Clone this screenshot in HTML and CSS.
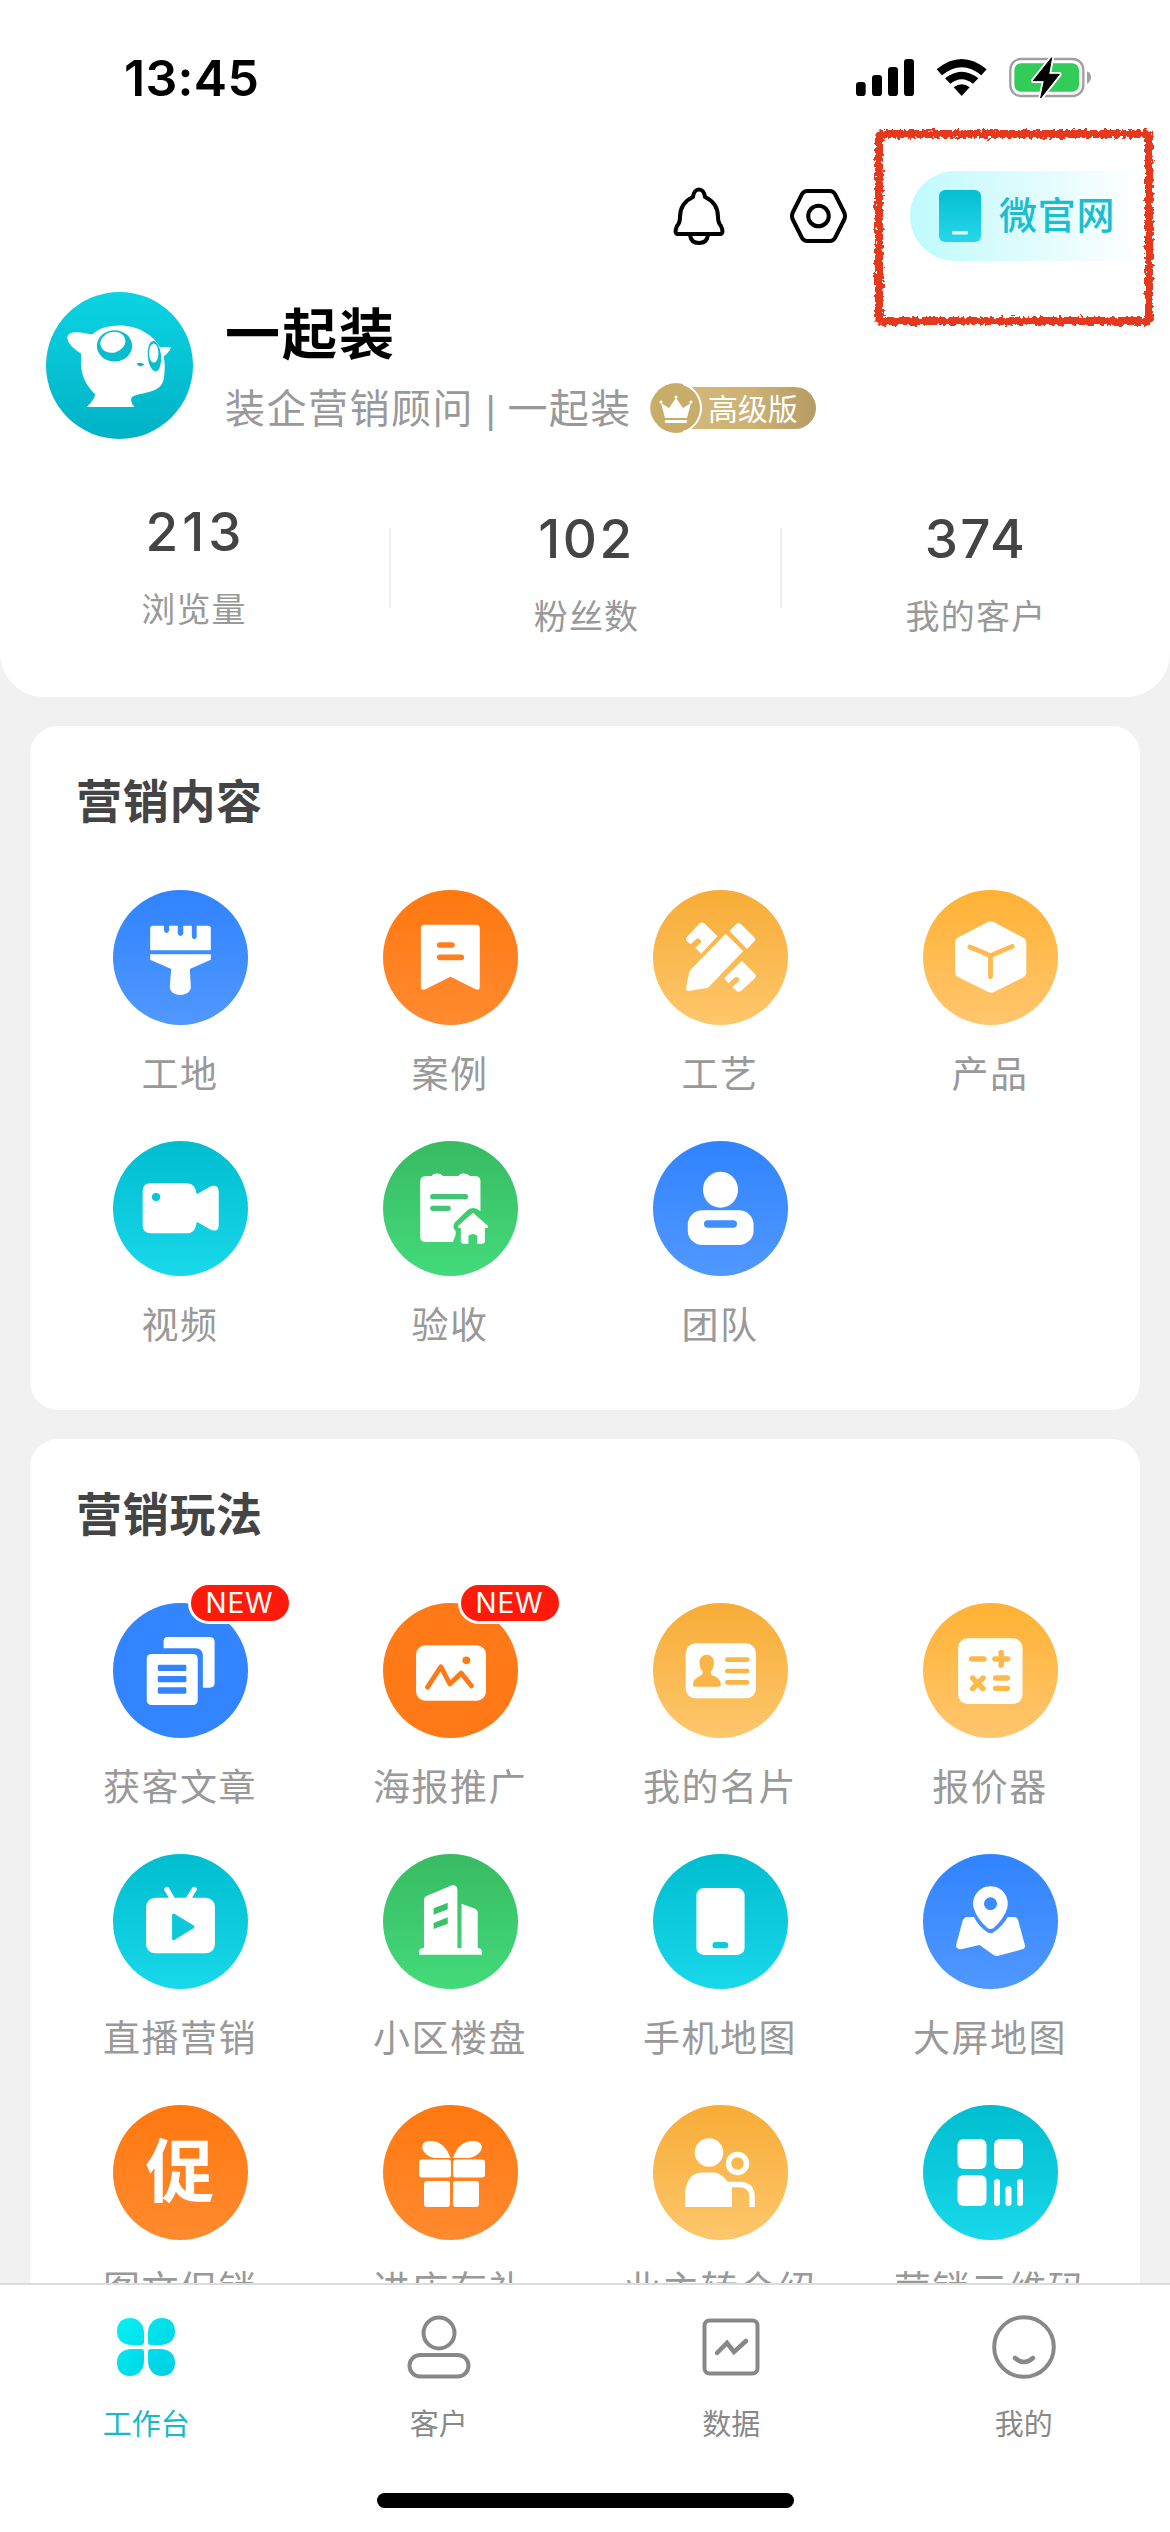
FILE: index.html
```html
<!DOCTYPE html>
<html lang="zh-CN">
<head>
<meta charset="utf-8">
<title>工作台</title>
<link rel="stylesheet" href="styles.css">
</head>
<body>
<div class="app">
  <header class="header">
    <div class="status">
      <span class="time">13:45</span>
      <svg class="status-icons" viewBox="0 0 810 240" width="270" height="80">
        <rect x="48" y="126" width="29" height="42" rx="10"/><rect x="96" y="105" width="30" height="63" rx="10"/><rect x="144" y="81" width="30" height="87" rx="10"/><rect x="192" y="57" width="30" height="111" rx="10"/>
        <path d="M290 88Q365 26 440 88L424 106Q365 57 306 106Z"/>
        <path d="M315 115Q365 75 415 115L399 131Q365 104 331 131Z"/>
        <path d="M341 142Q365 124 389 142L365 168Z"/>
        <rect x="511" y="57" width="219" height="111" rx="32" fill="#fff" stroke="#a0a0a2" stroke-width="7"/>
        <path d="M741 94Q753 99 753 112T741 131Z" fill="#a0a0a2"/>
        <rect x="523" y="70" width="194" height="85" rx="20" fill="#33cc59"/>
        <path d="M635 53L580 122H613L602 174L658 103H626Z" stroke="#fff" stroke-width="14" stroke-linejoin="round"/>
        <path d="M635 53L580 122H613L602 174L658 103H626Z" stroke="#000" stroke-width="3" stroke-linejoin="round"/>
      </svg>
    </div>
    <div class="toolbar">
      <svg class="bell" viewBox="0 0 52 58" width="52" height="58" fill="none" stroke="#000" stroke-width="4" stroke-linejoin="round">
        <path d="M20 10C21 0 31 0 32 10Q45 16 45 30Q45 36 48 39Q52 48 45 47H7Q0 48 4 39Q7 36 7 30Q7 16 20 10Z"/>
        <path d="M17 48Q18 56 26 56T35 48"/>
      </svg>
      <svg class="hexagon" viewBox="0 0 57 54" width="57" height="54" fill="none" stroke="#000" stroke-width="4">
        <path d="M17 2H40Q43 2 45 5L54 23Q56 27 54 31L45 49Q43 52 40 52H17Q14 52 12 49L3 31Q1 27 3 23L12 5Q14 2 17 2Z"/><circle cx="28.5" cy="27" r="10.3"/>
      </svg>
      <div class="site">
        <svg viewBox="0 0 42 52" width="42" height="52"><defs><linearGradient id="gp" x2="0" y2="1"><stop stop-color="#06bfd2"/><stop offset="1" stop-color="#26d7e9"/></linearGradient></defs><rect width="42" height="52" rx="6" fill="url(#gp)"/><rect x="13" y="41" width="16" height="3.5" rx="1" fill="#e9ffff"/></svg>
        <span>微官网</span>
        <svg class="mark" viewBox="0 0 290 206" width="290" height="206"><defs><filter id="crayon" x="-5%" y="-5%" width="110%" height="110%"><feTurbulence type="fractalNoise" baseFrequency=".28" numOctaves="2" seed="4"/><feDisplacementMap in="SourceGraphic" scale="7" xChannelSelector="R" yChannelSelector="G"/></filter></defs><rect x="10" y="10" width="270" height="187" rx="3" fill="none" stroke="#e6391b" stroke-width="8" filter="url(#crayon)"/></svg>
      </div>
    </div>
    <div class="profile">
      <svg class="avatar" viewBox="20 20 442 442" width="147" height="147">
        <defs><linearGradient id="ga" x2="0" y2="1"><stop stop-color="#0bd3e2"/><stop offset="1" stop-color="#00b2c6"/></linearGradient></defs>
        <circle cx="241" cy="241" r="221" fill="url(#ga)"/>
        <path fill="#fff" d="M84 159C84 136 122 138 159 148C190 113 276 112 317 141Q350 160 363 187Q380 183 396 187Q390 202 374 214Q380 244 374 281C366 325 315 319 279 335Q270 348 286 366H143Q165 343 168 328C132 292 121 260 126 206Q86 180 84 159Z"/>
        <ellipse cx="226" cy="182" rx="53" ry="47" fill="#08bdcd"/><ellipse cx="221" cy="171" rx="38" ry="31" fill="#fff" transform="rotate(-16 221 171)"/>
        <ellipse cx="346" cy="213" rx="20" ry="46" fill="#08bdcd" transform="rotate(-5 346 213)"/><ellipse cx="344" cy="204" rx="14" ry="29" fill="#fff"/>
        <path d="M292 235Q305 230 316 238Q303 250 292 235Z" fill="#08b4c6"/>
      </svg>
      <div class="who">
        <h1>一起装</h1>
        <div class="role"><span>装企营销顾问 <i>|</i> 一起装</span>
          <div class="level">
            <svg viewBox="0 0 52 52" width="52" height="52"><circle cx="26" cy="26" r="25" fill="#c8ac69" /><path d="M33 2A25 25 0 0 1 33 50" fill="none" stroke="#fff" stroke-width="2"/><path fill="#fff" d="M11 21L19 26L26 16L33 26L41 21L37 36H15ZM15 38H37V41H15Z"/><circle cx="11" cy="20" r="1.6" fill="#fff"/><circle cx="26" cy="15" r="1.6" fill="#fff"/><circle cx="41" cy="20" r="1.6" fill="#fff"/></svg>
            <span>高级版</span>
          </div>
        </div>
      </div>
    </div>
    <div class="stats">
      <div class="stat first"><b>213</b><span>浏览量</span></div>
      <div class="stat"><b>102</b><span>粉丝数</span></div>
      <div class="stat"><b>374</b><span>我的客户</span></div>
    </div>
  </header>

  <main class="content">
    <section class="card">
      <h2>营销内容</h2>
      <div class="grid">
        <div class="item"><div class="disc blue"><svg viewBox="154 90 392 405" preserveAspectRatio="none">
          <path d="M270 197H302V212Q309 226 317 212V197H342V222Q350 234 358 222V197H383V232Q390 244 397 232V197H430Q438 197 438 205V271H262V205Q262 197 270 197ZM262 283H438V299L377 327L380 380C380 413 319 413 319 380L323 327L262 299Z"/></svg></div><span>工地</span></div>
        <div class="item"><div class="disc orange"><svg viewBox="938 90 392 405" preserveAspectRatio="none">
          <path d="M1060 194H1208Q1219 194 1219 205V380Q1219 392 1207 388L1134 350L1061 388Q1048 392 1048 380V205Q1048 194 1060 194Z"/><path class="cut" d="M1103 255H1138M1103 292H1165" stroke="#ff7f1f" stroke-width="17"/></svg></div><span>案例</span></div>
        <div class="item"><div class="disc amber"><svg viewBox="154 90 392 405" preserveAspectRatio="none">
          <path d="M365 221L416 273L314 383L257 393Q249 394 250 385L260 333ZM376 213L397 191Q403 187 409 192L449 233Q453 238 449 243L427 267ZM290 190Q297 185 303 190L341 229L294 281L277 264L294 246Q292 233 281 236L263 253L251 242Q248 237 252 231ZM412 302L451 343Q455 349 450 355L409 393Q403 398 397 393L385 382L405 361Q405 348 392 352L373 370L361 355Z"/></svg></div><span>工艺</span></div>
        <div class="item"><div class="disc gold"><svg viewBox="938 90 392 405" preserveAspectRatio="none">
          <path d="M1125 187Q1135 182 1145 187L1227 232Q1238 238 1238 248V337Q1238 347 1228 353L1146 395Q1136 400 1126 395L1041 352Q1031 347 1031 336V247Q1031 237 1041 232Z"/><path class="cut" d="M1074 261L1134 287L1197 259M1134 287V350" stroke="#ffba4d" stroke-width="14"/></svg></div><span>产品</span></div>
        <div class="item"><div class="disc cyan"><svg viewBox="154 843 392 405" preserveAspectRatio="none">
          <path d="M262 970H368Q394 970 397 1003L438 979Q460 972 461 995V1096Q461 1118 438 1109L397 1085Q394 1120 367 1120H264Q240 1120 240 1096V995Q240 970 262 970Z"/><circle cx="279" cy="1011" r="12" fill="#07c6d8"/></svg></div><span>视频</span></div>
        <div class="item"><div class="disc green"><svg viewBox="938 843 392 405" preserveAspectRatio="none">
          <path d="M1063 948H1079Q1085 938 1105 942L1112 948H1157Q1163 938 1181 942L1191 948H1206Q1221 949 1221 964V1054Q1199 1034 1180 1054L1147 1087Q1137 1100 1149 1114V1125L1141 1146H1062Q1046 1146 1046 1130V965Q1046 949 1063 948Z"/><path class="cut" d="M1083 1010H1177M1083 1045H1127" stroke="#42c572" stroke-width="16"/><path d="M1199 1058L1243 1098V1104H1234V1144Q1234 1151 1227 1151H1212V1127Q1199 1117 1186 1127V1151H1171Q1164 1151 1164 1144V1104H1156V1098Z"/></svg></div><span>验收</span></div>
        <div class="item"><div class="disc blue"><svg viewBox="154 843 392 405" preserveAspectRatio="none">
          <ellipse cx="350" cy="989" rx="51" ry="54"/><rect x="255" y="1051" width="191" height="104" rx="43"/><path class="cut" d="M313 1092H387" stroke="#408fff" stroke-width="22"/></svg></div><span>团队</span></div>
      </div>
    </section>

    <section class="card">
      <h2>营销玩法</h2>
      <div class="grid">
        <div class="item"><div class="disc flat-blue"><svg viewBox="154 128 392 405" preserveAspectRatio="none">
          <path d="M313 230H434Q449 230 449 245V368Q449 382 434 382H415V285Q414 265 394 264H301V243Q301 230 313 230Z"/><rect x="252" y="281" width="148" height="153" rx="14"/><g fill="#3385ff"><rect x="284" y="313" width="83" height="19" rx="4"/><rect x="284" y="347" width="83" height="19" rx="4"/><rect x="284" y="381" width="83" height="19" rx="4"/></g></svg><em>NEW</em></div><span>获客文章</span></div>
        <div class="item"><div class="disc flat-orange"><svg viewBox="938 128 392 405" preserveAspectRatio="none">
          <rect x="1034" y="255" width="203" height="166" rx="27"/><path class="cut" d="M1067 381L1106 319L1132 371L1165 338L1195 377" stroke="#ff7a17" stroke-width="14"/><circle cx="1180" cy="300" r="11.5" fill="#ff7a17"/></svg><em>NEW</em></div><span>海报推广</span></div>
        <div class="item"><div class="disc amber"><svg viewBox="154 128 392 405" preserveAspectRatio="none">
          <rect x="249" y="249" width="204" height="165" rx="29"/><path fill="#fab548" d="M289 306C289 276 331 276 331 306Q331 324 322 333Q321 346 333 348Q350 355 351 373Q351 379 345 379H275Q269 379 270 373Q271 355 289 348Q300 343 298 333Q289 324 289 306Z"/><path class="cut" d="M370 298H427M370 332H427M370 366H427" stroke="#fab548" stroke-width="14"/></svg></div><span>我的名片</span></div>
        <div class="item"><div class="disc gold"><svg viewBox="938 128 392 405" preserveAspectRatio="none">
          <rect x="1040" y="234" width="187" height="197" rx="28"/><path class="cut" d="M1079 296H1115M1147 296H1184M1165 276V315M1082 353L1112 385M1112 353L1082 385M1149 353H1183M1149 384H1183" stroke="#ffb94b" stroke-width="16"/></svg></div><span>报价器</span></div>
        <div class="item"><div class="disc cyan"><svg viewBox="154 882 392 405" preserveAspectRatio="none">
          <path d="M310 988L327 1018M390 988L372 1018" stroke="#fff" stroke-width="15" stroke-linecap="round"/><rect x="250" y="1013" width="200" height="167" rx="27"/><path d="M330 1065L386 1100L330 1136Z" fill="#0bc8da" stroke="#0bc8da" stroke-width="9" stroke-linejoin="round"/></svg></div><span>直播营销</span></div>
        <div class="item"><div class="disc green"><svg viewBox="938 882 392 405" preserveAspectRatio="none">
          <path d="M1066 1007L1138 976Q1154 974 1154 990V1164H1166V1031L1205 1046Q1213 1050 1213 1057V1164Q1225 1164 1225 1175V1184H1043V1173Q1045 1164 1057 1164V1020Q1057 1011 1066 1007Z"/><path fill="#39c368" d="M1085 1045L1126 1028V1048L1085 1064ZM1085 1089L1126 1072V1091L1085 1107Z"/></svg></div><span>小区楼盘</span></div>
        <div class="item"><div class="disc cyan"><svg viewBox="154 882 392 405" preserveAspectRatio="none">
          <rect x="280" y="984" width="140" height="201" rx="22"/><rect x="327" y="1146" width="45" height="19" rx="8" fill="#0ccbdc"/></svg></div><span>手机地图</span></div>
        <div class="item"><div class="disc blue"><svg viewBox="938 882 392 405" preserveAspectRatio="none">
          <path fill-rule="evenodd" d="M1134 979C1170 979 1190 1013 1183 1043Q1174 1075 1143 1104Q1134 1110 1125 1104Q1094 1075 1085 1043C1078 1013 1099 979 1134 979ZM1134 1012A19 19 0 1 0 1134 1050A19 19 0 1 0 1134 1012Z"/><path d="M1066 1071H1086Q1099 1099 1124 1116Q1134 1124 1144 1116Q1169 1099 1184 1071H1201Q1211 1071 1214 1080L1234 1156Q1235 1166 1226 1168L1154 1188Q1148 1189 1142 1184L1102 1155L1048 1168Q1031 1168 1035 1152L1053 1082Q1057 1072 1066 1071Z"/></svg></div><span>大屏地图</span></div>
        <div class="item"><div class="disc orange"><strong>促</strong></div><span>图文促销</span></div>
        <div class="item"><div class="disc orange"><svg viewBox="0 0 135 135">
          <path d="M67.500 53H52C38 51 35 36 46 36Q61 35 67.500 53ZM70 53Q76 35 92 36C104 38 99 51 86 53Z"/><rect x="36" y="54.500" width="32" height="18" rx="3"/><rect x="70" y="54.500" width="32" height="18" rx="3"/><rect x="41" y="76" width="26" height="26" rx="3"/><rect x="70" y="76" width="26" height="26" rx="3"/></svg></div><span>进店有礼</span></div>
        <div class="item"><div class="disc amber"><svg viewBox="0 0 135 135">
          <circle cx="56" cy="47.500" r="14.300"/><path d="M32 102V88Q34 68 49 67.500H61Q68 68 74 76L79 80V102Z"/><circle cx="84.500" cy="58.500" r="9" fill="none" stroke="#fff" stroke-width="5.500"/><path d="M75 79.500H87Q99 80 99 92V102" fill="none" stroke="#fff" stroke-width="5.500"/></svg></div><span>业主转介绍</span></div>
        <div class="item"><div class="disc cyan"><svg viewBox="0 0 135 135">
          <rect x="34.500" y="34" width="29" height="30" rx="6"/><rect x="71" y="34" width="29" height="30" rx="6"/><rect x="34.500" y="70" width="29" height="31" rx="6"/><rect x="71" y="74" width="6" height="27" rx="3"/><rect x="82.500" y="81" width="6" height="20" rx="3"/><rect x="94" y="74" width="6" height="27" rx="3"/></svg></div><span>营销二维码</span></div>
      </div>
    </section>
  </main>

  <footer class="footer">
    <nav class="tabs">
      <div class="tab active"><svg viewBox="0 0 64 64"><defs><linearGradient id="gc" gradientUnits="userSpaceOnUse" x1="2" y1="2" x2="62" y2="62"><stop stop-color="#00f2f4"/><stop offset="1" stop-color="#00cde3"/></linearGradient></defs><path fill="url(#gc)" d="M16 3C24 3 30 9 30 18V27Q30 30 27 30H18C9 30 3 25 3 16.500S8 3 16 3ZM48 3C56 3 61 8 61 16.500S55 30 46 30H37Q34 30 34 27V18C34 9 40 3 48 3ZM18 34H27Q30 34 30 37V46C30 55 24 61 16 61S3 56 3 47.500S9 34 18 34ZM37 34H46C55 34 61 39 61 47.500S56 61 48 61S34 55 34 46V37Q34 34 37 34Z"/></svg><span>工作台</span></div>
      <div class="tab"><svg viewBox="0 0 64 64"><circle cx="32" cy="18" r="15.500"/><rect x="2.500" y="40" width="59" height="21.500" rx="10.700"/></svg><span>客户</span></div>
      <div class="tab"><svg viewBox="0 0 64 64"><rect x="5.500" y="5.500" width="53" height="53" rx="5"/><path d="M18 38L28 28L35 37L47 26" stroke-width="4.500"/></svg><span>数据</span></div>
      <div class="tab"><svg viewBox="0 0 64 64"><circle cx="32" cy="32" r="29.800"/><path d="M23 43Q32 51 41 43" stroke-width="4.500"/></svg><span>我的</span></div>
    </nav>
    <div class="home"></div>
  </footer>
</div>
</body>
</html>
```
FILE: styles.css
```css
* { box-sizing: border-box; }
body {
  margin: 0;
  font-family: Inter, "Noto Sans CJK SC", sans-serif;
  color: #444;
}
svg { display: block; flex: none; }
.app {
  width: 1170px;
  height: 2532px;
  display: flex;
  flex-direction: column;
  background: #f1f1f1;
  overflow: hidden;
}

/* header */
.header {
  height: 697px;
  flex: none;
  background: #fff;
  border-radius: 0 0 44px 44px;
}
.status {
  height: 130px;
  padding: 40px 60px 0 124px;
  display: flex;
  justify-content: space-between;
}
.time {
  font-size: 50px;
  font-weight: 600;
  line-height: 76px;
  letter-spacing: .3px;
  color: #000;
}
.toolbar {
  height: 172px;
  display: flex;
  align-items: center;
  padding-left: 673px;
}
.hexagon { margin-left: 65px; }
.site {
  position: relative;
  display: flex;
  align-items: center;
  width: 232px;
  height: 90px;
  margin-left: 63px;
  padding-left: 29px;
  gap: 18px;
  border-radius: 45px 0 0 45px;
  background: linear-gradient(90deg, #befbfd, #d9fbfd 40%, #fff);
  font-size: 38px;
  font-weight: 500;
  letter-spacing: .7px;
  color: #19bfd0;
}
.site span { margin-bottom: 7px; }
.mark {
  position: absolute;
  left: -41px;
  top: -47px;
}
.profile {
  height: 150px;
  padding: 0 0 0 46px;
  margin-top: -10px;
  display: flex;
}
.who { margin-left: 32px; padding-top: 6px; }
h1 {
  margin: 0;
  font-size: 55px;
  line-height: 72px;
  letter-spacing: 2px;
  font-weight: 700;
  color: #000;
}
.role {
  display: flex;
  align-items: center;
  margin-top: 8px;
  height: 56px;
  font-size: 40px;
  letter-spacing: 1.5px;
  word-spacing: -1px;
  white-space: nowrap;
  color: #999;
}
.role i {
  font-family: "Liberation Sans", sans-serif;
  font-style: normal;
  font-size: 38px;
  letter-spacing: 0;
}
.level {
  display: flex;
  align-items: center;
  width: 166px;
  height: 42px;
  margin: 4px 0 0 18px;
  border-radius: 21px;
  background: linear-gradient(90deg, #d4bb7c, #cdb274 60%, #b79b64);
  color: #fff;
  font-size: 30px;
  letter-spacing: 0;
}
.level svg { margin-right: 6px; }
.level span { margin-bottom: 3px; }
.stats {
  height: 180px;
  margin-top: 50px;
  display: flex;
}
.stat {
  width: 391px;
  padding-top: 16px;
  display: flex;
  flex-direction: column;
  align-items: center;
  background: linear-gradient(#eee, #eee) right 36px / 2px 80px no-repeat;
}
.stat:last-child { width: 388px; background: none; }
.stat.first { padding-top: 9px; }
.stat b {
  font-size: 53px;
  line-height: 62px;
  font-weight: 500;
  letter-spacing: 2.5px;
}
.stat.first b { letter-spacing: 4px; }
.stat span {
  margin-top: 22px;
  font-size: 34px;
  line-height: 50px;
  letter-spacing: 1.2px;
  color: #999;
}
.stat.first span { margin-right: 3px; }

/* content */
.content {
  flex: 1;
  min-height: 0;
  padding: 29px 30px 0;
  overflow: hidden;
}
.card {
  height: 684px;
  margin-bottom: 29px;
  padding: 42px 15px 0;
  border-radius: 28px;
  background: #fff;
}
.card:last-child { height: 1000px; }
h2 {
  margin: 0 0 56px;
  padding-left: 31px;
  font-size: 46px;
  line-height: 66px;
  letter-spacing: .7px;
  font-weight: 700;
}
.grid {
  display: grid;
  grid-template-columns: repeat(4, 270px);
  grid-auto-rows: 251px;
}
.item {
  display: flex;
  flex-direction: column;
  align-items: center;
}
.item > span {
  margin-top: 23px;
  font-size: 37px;
  line-height: 54px;
  letter-spacing: 1.5px;
  color: #999;
}
.disc {
  position: relative;
  width: 135px;
  height: 135px;
  border-radius: 50%;
  display: flex;
  align-items: center;
  justify-content: center;
}
.disc svg { width: 135px; height: 135px; fill: #fff; }
.disc .cut { fill: none; stroke-linecap: round; stroke-linejoin: round; }
.disc strong {
  font-size: 69px;
  line-height: 135px;
  color: #fff;
}
.disc em {
  position: absolute;
  left: 75px;
  top: -21px;
  width: 104px;
  height: 42px;
  border: 3px solid #fff;
  border-radius: 21px;
  background: #ff1a0c;
  color: #fff;
  font-size: 28px;
  line-height: 36px;
  letter-spacing: .8px;
  font-style: normal;
  text-align: center;
}
.blue { background: linear-gradient(#3083ff, #5098ff); }
.orange { background: linear-gradient(#ff7810, #ff8a2f); }
.amber { background: linear-gradient(#f7ac36, #fec76c); }
.gold { background: linear-gradient(#ffb234, #ffc66e); }
.cyan { background: linear-gradient(#00bdd0, #19d8ea); }
.green { background: linear-gradient(#38bb63, #43da7a); }
.flat-blue { background: #3385ff; }
.flat-orange { background: #ff7a17; }

/* bottom bar */
.footer {
  height: 249px;
  flex: none;
  background: #fff;
  border-top: 2px solid #dcdcdc;
}
.tabs { display: flex; height: 208px; padding-top: 30px; }
.tab {
  flex: 1;
  display: flex;
  flex-direction: column;
  align-items: center;
  font-size: 29px;
  line-height: 42px;
  color: #888;
}
.tab svg {
  width: 64px;
  height: 64px;
  fill: none;
  stroke: #888;
  stroke-width: 4;
  stroke-linecap: round;
}
.tab span { margin-top: 25px; }
.tab.active { color: #17b9c8; }
.tab.active svg { stroke: none; }
.home {
  width: 417px;
  height: 15px;
  margin: 0 auto;
  border-radius: 8px;
  background: #000;
}
```
